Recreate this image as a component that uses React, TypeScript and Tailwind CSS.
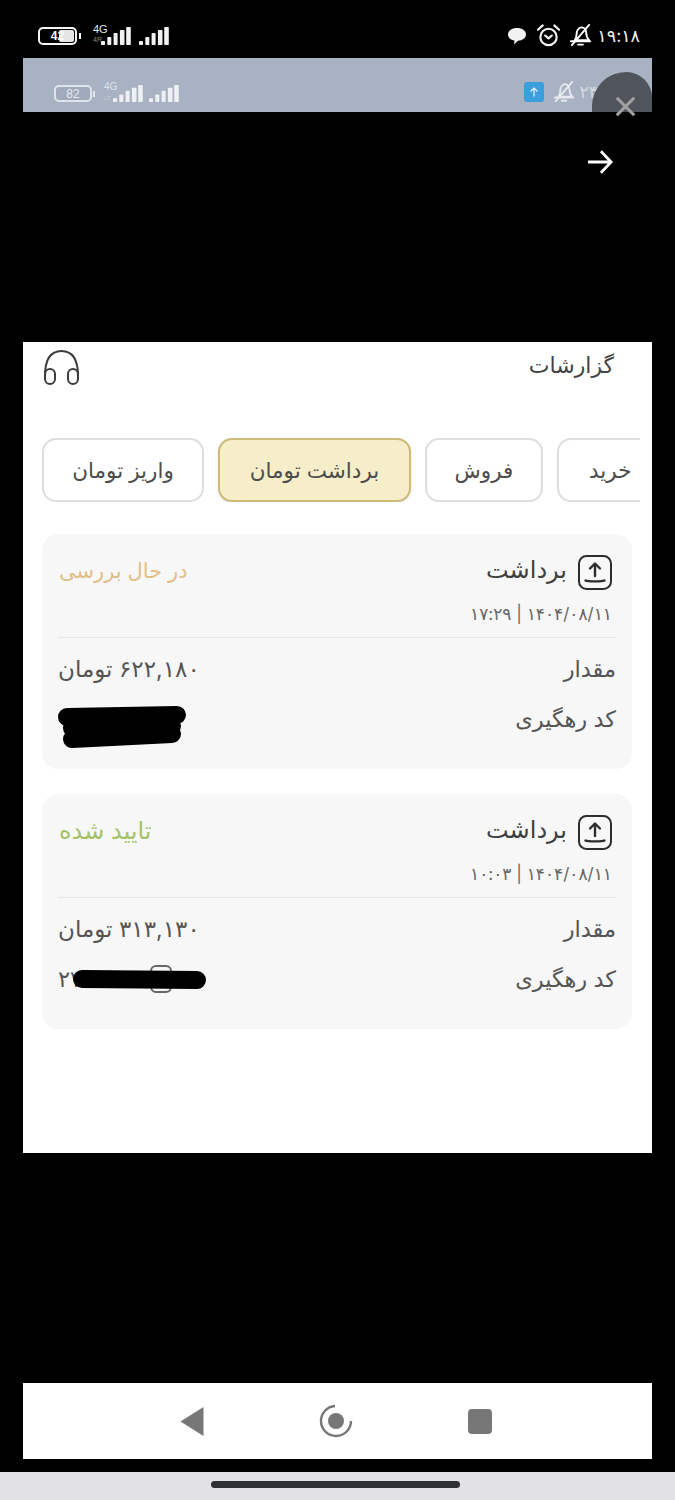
import { ReactNode } from "react";

const font = "font-['Inter','DejaVu_Sans',sans-serif]";

function Signal({ color = "#f2f2f2", height = 18 }: { color?: string; height?: number }) {
    const heights = [4, 8, 12, 15, 18];
    return (
        <svg width={30} height={height} viewBox="0 0 30 18" preserveAspectRatio="none">
            {heights.map((h, i) => (
                <rect key={i} x={i * 6.3} y={18 - h} width={i > 2 ? 4.6 : 4} height={h} rx={0.8} fill={color} />
            ))}
        </svg>
    );
}

function BellOff({ size = 22, color = "#fff" }: { size?: number; color?: string }) {
    return (
        <svg width={size} height={size} viewBox="0 0 24 24" fill="none" stroke={color} strokeWidth={2} strokeLinecap="round" strokeLinejoin="round">
            <path d="M6 17c1.500-2 2-4 2-7 0-3 2-6 5-6.500 3 0 5 2.500 5 6 0 3 1 5.500 3 7.500H6z" />
            <path d="M2 18h20" />
            <path d="M9.500 21.500h5" />
            <path d="M3 22L21 1" />
        </svg>
    );
}

function Alarm() {
    return (
        <svg width={25} height={25} viewBox="0 0 26 26" fill="none" stroke="#f4f4f4" strokeWidth={2.200} strokeLinecap="round" strokeLinejoin="round">
            <circle cx={13} cy={14.500} r={8.500} />
            <path d="M9.500 13l3.500 3 3.500-3" />
            <path d="M2 7l5-4.500" />
            <path d="M24 7l-5-4.500" />
        </svg>
    );
}

function UploadBox() {
    return (
        <svg width={36} height={37} viewBox="0 0 36 37" fill="none" stroke="#2d2d2d" strokeLinecap="round" strokeLinejoin="round">
            <rect x={2} y={2} width={32} height={33} rx={7.500} strokeWidth={2} />
            <path d="M18 22V10M13 14.500l5-5 5 5" strokeWidth={2.400} />
            <path d="M8.500 26.500c2 1.200 17 1.200 19 0" strokeWidth={2.400} />
        </svg>
    );
}

function Tab({ width, active, children }: { width: string; active?: boolean; children: ReactNode }) {
    return (
        <div
            className={`${width} h-[64px] shrink-0 rounded-[14px] border-2 flex items-center justify-center text-[21.5px] text-[#4c4c4c] ${
                active ? "bg-[#f6edc9] border-[#cdbb7a] shadow-sm" : "bg-white border-[#dedede]"
            }`}
        >
            {children}
        </div>
    );
}

function ReportCard({
    status,
    statusClass,
    date,
    amount,
    scribble,
}: {
    status: string;
    statusClass: string;
    date: string;
    amount: string;
    scribble: ReactNode;
}) {
    return (
        <div dir="rtl" className="h-[235px] rounded-2xl bg-[#f7f7f7] px-[16px] pt-[20px]">
            <div className="flex items-center justify-between h-[36px] pr-[3px] pl-[1px]">
                <div className="flex items-center gap-[10px]">
                    <UploadBox />
                    <span className="text-[24px] text-[#3f3f3f] leading-none -mt-[4px]">برداشت</span>
                </div>
                <span className={`leading-none -mt-[3px] ${statusClass}`}>{status}</span>
            </div>
            <div className="mt-[14px] h-[20px] pr-[4px] text-[17px] leading-[20px] text-[#666]">{date}</div>
            <div className="mt-[13px] h-px bg-[#e6e6e6]" />
            <div className="mt-[15px] h-[32px] flex items-center justify-between text-[22.5px] text-[#555]">
                <span>مقدار</span>
                <span className="text-[23px]">{amount} تومان</span>
            </div>
            <div className="mt-[18px] h-[32px] flex items-center justify-between text-[22.5px] text-[#555]">
                <span>کد رهگیری</span>
                {scribble}
            </div>
        </div>
    );
}

export default function App() {
    return (
        <div className={`w-[675px] h-[1500px] bg-black flex flex-col overflow-hidden ${font}`}>
            {/* phone status bar */}
            <div className="h-[58px] shrink-0 pl-[38px] pr-[35px] pt-[27px] flex justify-between items-start">
                <div className="flex items-center">
                    <div className="relative w-[39px] h-[18px] rounded-[5px] border-2 border-[#f4f4f4] flex items-center justify-center text-[12px] font-bold text-white">
                        <div className="absolute right-[1px] top-[1px] bottom-[1px] w-[15px] bg-[#e5e5e5] rounded-[2px]" />
                        <span className="relative font-['Liberation_Sans',sans-serif]">42</span>
                    </div>
                    <div className="ml-[2px] w-[2px] h-[6px] bg-[#f4f4f4]" />
                    <div className="relative ml-[12px] w-[8px] h-[18px]">
                        <span className="absolute left-0 -top-[3px] text-[11px] leading-[11px] text-[#e8e8e8] font-['Liberation_Sans',sans-serif]">4G</span>
                        <span className="absolute left-0 top-[9px] text-[7px] leading-[8px] text-[#888] font-['Liberation_Sans',sans-serif]">4R</span>
                    </div>
                    <Signal />
                    <div className="w-[8px]" />
                    <Signal />
                </div>
                <div className="flex items-center -mt-[4px]">
                    <svg width={20} height={20} viewBox="0 0 20 20" fill="#f2f2f2">
                        <path d="M10 2c5 0 9 2.600 9 6.500 0 3.500-3.500 6-8 6.200L7 18.500l.5-4C3.500 14 1 11.500 1 8.500 1 4.600 5 2 10 2z" />
                    </svg>
                    <div className="w-[9px]" />
                    <Alarm />
                    <div className="w-[8px]" />
                    <BellOff size={23} />
                    <span className="ml-[5px] text-[17.5px] leading-none text-[#eee]">۱۹:۱۸</span>
                </div>
            </div>

            {/* embedded status bar of the screenshot */}
            <div className="relative mx-[23px] h-[54px] shrink-0 bg-[#a8b2c2] pl-[31px] pt-[27px] flex justify-between items-start overflow-visible">
                <div className="flex items-center">
                    <div className="w-[38px] h-[17px] rounded-[5px] border-2 border-[#dfe3ea] bg-[#a0aaba] flex items-center justify-center text-[12px] text-[#e8ebf0] font-['Liberation_Sans',sans-serif]">
                        82
                    </div>
                    <div className="ml-[1px] w-[2px] h-[6px] bg-[#e4e7ec]" />
                    <div className="relative ml-[9px] w-[9px] h-[17px]">
                        <span className="absolute left-0 -top-[4px] text-[10px] leading-[11px] text-[#dfe3ea] font-['Liberation_Sans',sans-serif]">4G</span>
                        <span className="absolute left-0 top-[9px] text-[6px] leading-[8px] text-[#c5ccd8] font-['Liberation_Sans',sans-serif]">LT</span>
                    </div>
                    <Signal color="#eef0f4" height={17} />
                    <div className="w-[6px]" />
                    <Signal color="#eef0f4" height={17} />
                </div>
                <div className="flex items-center gap-[9px] mr-[31px] -mt-[4px]">
                    <div className="w-[20px] h-[20px] rounded-[3px] bg-[#3a9fdc] flex items-center justify-center">
                        <svg width={10} height={10} viewBox="0 0 10 10" fill="none" stroke="#e8f6ff" strokeWidth={1.200}>
                            <path d="M5 9.500V1M1.500 4.500L5 1l3.500 3.500" />
                        </svg>
                    </div>
                    <BellOff size={22} color="#e6e9ef" />
                    <span className="-ml-[4px] text-[17px] leading-none text-[#d5dae3]">۲۳:۲۳</span>
                </div>
                {/* close button lying over the bar */}
                <div className="absolute right-0 top-[14px] w-[60px] h-[40px] bg-[#50545b] rounded-tl-[40px] rounded-tr-[30px]" />
                <svg className="absolute right-[16px] top-[38px]" width={21} height={21} viewBox="0 0 24 24" stroke="#a2a2a2" strokeWidth={3.600}>
                    <path d="M2 2l20 20M22 2L2 22" />
                </svg>
            </div>

            {/* arrow area */}
            <div className="h-[230px] shrink-0 flex justify-end pr-[62px] pt-[37px]">
                <svg width={26} height={26} viewBox="0 0 28 28" fill="none" stroke="#fff" strokeWidth={3}>
                    <path d="M1 14h25M15 2.500L26 14 15 25.500" />
                </svg>
            </div>

            {/* report panel */}
            <div className="mx-[23px] h-[811px] shrink-0 bg-white">
                <div className="h-[96px] pl-[19px] pr-[38px] pt-[7px] flex justify-between items-start">
                    <svg width={39} height={37} viewBox="0 0 39 37" fill="none" stroke="#3c3c3c" strokeWidth={2} strokeLinecap="round">
                        <path d="M3 27C3 10 9 2 19.500 2S36 10 36 27" />
                        <rect x={3} y={20} width={10} height={15} rx={5} />
                        <rect x={26} y={20} width={10} height={15} rx={5} />
                    </svg>
                    <span dir="rtl" className="text-[22px] leading-[32px] text-[#444]">گزارشات</span>
                </div>

                <div className="ml-[19px] w-[598px] h-[64px] overflow-hidden flex gap-[14px]">
                    <Tab width="w-[162px]">واریز تومان</Tab>
                    <Tab width="w-[193px]" active>برداشت تومان</Tab>
                    <Tab width="w-[118px]">فروش</Tab>
                    <div className="w-[120px] h-[64px] shrink-0 rounded-[14px] border-2 border-[#dedede] bg-white pl-[30px] flex items-center text-[21.5px] text-[#4c4c4c]">
                        خرید
                    </div>
                </div>

                <div className="ml-[19px] w-[590px] mt-[32px] flex flex-col gap-[25px]">
                    <ReportCard
                        status="در حال بررسی"
                        statusClass="text-[21px] text-[#e2bf85]"
                        date="۱۴۰۴/۰۸/۱۱ | ۱۷:۲۹"
                        amount="۶۲۲,۱۸۰"
                        scribble={
                            <svg className="translate-y-[10px]" width={128} height={46} viewBox="0 0 128 46">
                                <path d="M9 11 L119 9 M14 33 L114 28 M14 22 L114 20" stroke="#000" strokeWidth={18} strokeLinecap="round" fill="none" />
                            </svg>
                        }
                    />
                    <ReportCard
                        status="تایید شده"
                        statusClass="text-[24px] text-[#a4c267]"
                        date="۱۴۰۴/۰۸/۱۱ | ۱۰:۰۳"
                        amount="۳۱۳,۱۳۰"
                        scribble={
                            <div className="relative w-[148px] h-[32px] flex items-center justify-end">
                                <span className="text-[22.5px] text-[#555]">۲۷</span>
                                <div className="absolute right-[34px] top-[2px] w-[22px] h-[28px] rounded-[6px] border-2 border-[#666]" />
                                <svg className="absolute right-0 top-[5px]" width={133} height={22} viewBox="0 0 133 22">
                                    <path d="M9 11 L124 12" stroke="#000" strokeWidth={18} strokeLinecap="round" fill="none" />
                                </svg>
                            </div>
                        }
                    />
                </div>
            </div>

            <div className="h-[230px] shrink-0" />

            {/* nav bar of the screenshot */}
            <div className="mx-[23px] h-[76px] shrink-0 bg-white flex items-center justify-center gap-[115px] pr-[3px]">
                <svg width={24} height={29} viewBox="0 0 24 29" fill="#777">
                    <path d="M23.500 0V29L0.500 14.500z" />
                </svg>
                <svg width={34} height={34} viewBox="0 0 34 34" fill="none" stroke="#777">
                    <circle cx={17} cy={17} r={8} fill="#777" stroke="none" />
                    <path d="M16 2A15 15 0 1 0 32 17" strokeWidth={2.400} />
                </svg>
                <div className="w-[24px] h-[25px] rounded-[4px] bg-[#777]" />
            </div>

            <div className="h-[13px] shrink-0" />

            {/* gesture bar */}
            <div className="flex-1 bg-[#e2e2e5] flex justify-center pt-[9px] pr-[4px]">
                <div className="w-[249px] h-[7px] rounded-full bg-[#2f3033]" />
            </div>
        </div>
    );
}
